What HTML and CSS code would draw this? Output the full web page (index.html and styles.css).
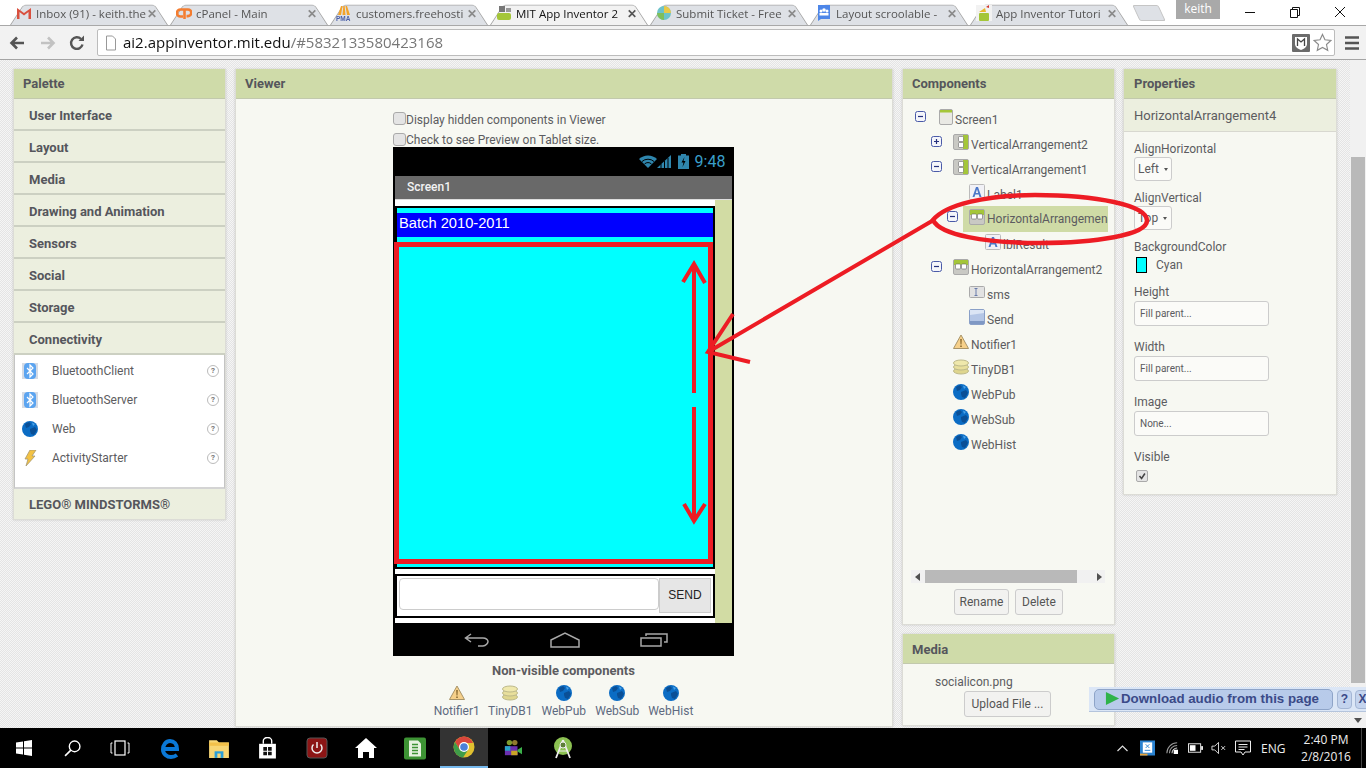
FILE: index.html
```html
<!DOCTYPE html>
<html lang="en">
<head>
<meta charset="utf-8">
<title>MIT App Inventor 2</title>
<link rel="stylesheet" href="styles.css">
</head>
<body>
<svg class="defs" width="0" height="0">
  <symbol id="globe" viewBox="0 0 16 16"><circle cx="8" cy="8" r="8" fill="#0b6cc4"/><path d="M3 3l4-2 2 2-2 3-3 1zM8 8l5-2 2 3-3 5-3-1-1-3z" fill="#0a4f96"/><path d="M10 1.500l3 1.500-2 2z" fill="#4aa3e8"/></symbol>
  <symbol id="warn" viewBox="0 0 16 16"><path d="M8 1L15.500 14.500H.5z" fill="#f6d08a" stroke="#a89468"/><path d="M7.200 5h1.600l-.3 5.500h-1zM7.200 11.500h1.600v1.600H7.200z" fill="#8a6a30"/></symbol>
  <symbol id="db" viewBox="0 0 16 16"><ellipse cx="8" cy="12" rx="7.500" ry="3" fill="#dfd68e" stroke="#bdb98a"/><ellipse cx="8" cy="8" rx="7.500" ry="3" fill="#e8df9c" stroke="#bdb98a"/><ellipse cx="8" cy="4" rx="7.500" ry="3" fill="#efe8ac" stroke="#bdb98a"/></symbol>
  <symbol id="harr" viewBox="0 0 16 16"><rect x=".5" y=".5" width="15" height="15" rx="1.500" fill="#c9c9c4" stroke="#aaa"/><rect x="1" y="1" width="14" height="5" fill="#a4c639"/><rect x="2.500" y="5" width="5" height="5" rx="1" fill="#fff" stroke="#666" stroke-width=".6"/><rect x="8.500" y="5" width="5" height="5" rx="1" fill="#fff" stroke="#666" stroke-width=".6"/></symbol>
  <symbol id="varr" viewBox="0 0 16 16"><rect x=".5" y=".5" width="15" height="15" rx="1.500" fill="#c9c9c4" stroke="#aaa"/><rect x="10" y="1" width="5" height="14" fill="#a4c639"/><rect x="5.500" y="2.500" width="5" height="5" rx="1" fill="#fff" stroke="#666" stroke-width=".6"/><rect x="5.500" y="8.500" width="5" height="5" rx="1" fill="#fff" stroke="#666" stroke-width=".6"/></symbol>
  <symbol id="label" viewBox="0 0 16 16"><rect x=".5" y=".5" width="15" height="15" rx="1" fill="#f1f1f6" stroke="#bbb"/><path d="M3.500 13L7 3h2l3.500 10h-2l-.8-2.500H6.300L5.500 13zM6.800 9h2.400L8 5.200z" fill="#4c78c8"/></symbol>
  <symbol id="textbox" viewBox="0 0 16 12"><rect x=".5" y=".5" width="15" height="11" rx="1" fill="#e2e2e2" stroke="#aaa"/><path d="M5.500 2.500h3M7 2.500v7M5.500 9.500h3" stroke="#6a7cab" fill="none"/></symbol>
  <symbol id="button" viewBox="0 0 16 16"><rect x=".5" y=".5" width="15" height="15" rx="1.500" fill="#b4c6e6" stroke="#8aa0c8"/><path d="M1 1h14v3L1 6z" fill="#dbe5f5"/><rect x="1" y="12" width="14" height="3" fill="#7f98c4"/></symbol>
  <symbol id="screen" viewBox="0 0 16 16"><rect x="1.500" y=".5" width="13" height="15" rx="1.500" fill="#e9e9e4" stroke="#aaa"/><rect x="2" y="1" width="12" height="2.500" fill="#a4c639"/></symbol>
  <symbol id="bt" viewBox="0 0 16 16"><rect width="16" height="16" fill="#d5dbe5"/><rect x="2" width="12" height="16" rx="4" fill="#5ba4f0"/><path d="M5 5l6 6-3 3V2l3 3-6 6" stroke="#fff" stroke-width="1.200" fill="none"/></symbol>
  <symbol id="bolt" viewBox="0 0 16 16"><path d="M8 0h6l-4 6h3L4 16l2-7H3z" fill="#f3c243" stroke="#a59873" stroke-width=".8"/></symbol>
  <symbol id="minus" viewBox="0 0 11 11"><rect x=".5" y=".5" width="10" height="10" rx="2" fill="#f4f5fa" stroke="#4a5aa8"/><path d="M3 5.500h5" stroke="#25307c" stroke-width="1.200"/></symbol>
  <symbol id="plus" viewBox="0 0 11 11"><rect x=".5" y=".5" width="10" height="10" rx="2" fill="#f4f5fa" stroke="#4a5aa8"/><path d="M3 5.500h5M5.500 3v5" stroke="#25307c" stroke-width="1.200"/></symbol>
</svg>

<header class="chrome">
  <div class="tabstrip">
    <div class="tab"><svg class="fav" viewBox="0 0 16 16"><path d="M1 14V3l7 5 7-5v11h-2.500V7L8 10.500 3.500 7v7z" fill="#d9503f"/></svg><span class="tab-text">Inbox (91) - keith.the</span><span class="tab-x">✕</span></div>
    <div class="tab"><svg class="fav" viewBox="0 0 16 16"><path d="M7.500 4.500H4.500a3.500 3.500 0 0 0 0 7H7M8.500 14V4.500h3.500a3.300 3.300 0 0 1 0 6.600H10.500" fill="none" stroke="#f47d30" stroke-width="2.600"/></svg><span class="tab-text">cPanel - Main</span><span class="tab-x">✕</span></div>
    <div class="tab"><svg class="fav" viewBox="0 0 16 16"><path d="M2 10L5 1h1.500L5 10zM6.500 10L7.300 1h1.400l.8 9zM11 10L9.500 1H11l3 9z" fill="#f3a32a"/><text class="fav-pma" x="0" y="16">PMA</text></svg><span class="tab-text">customers.freehosti</span><span class="tab-x">✕</span></div>
    <div class="tab tab-active"><svg class="fav" viewBox="0 0 16 16"><rect x="1" y="8" width="14" height="7" rx="2" fill="#a4c639"/><rect x="3" y="1" width="6" height="6" fill="#777"/><rect x="10" y="3" width="5" height="4" fill="#999"/></svg><span class="tab-text">MIT App Inventor 2</span><span class="tab-x">✕</span></div>
    <div class="tab"><svg class="fav" viewBox="0 0 16 16"><circle cx="8" cy="8" r="7" fill="#6ec3c9"/><path d="M8 1a7 7 0 0 1 7 7H8z" fill="#e9c947"/><path d="M1 8a7 7 0 0 0 7 7V8z" fill="#7fbf5a"/></svg><span class="tab-text">Submit Ticket - Free</span><span class="tab-x">✕</span></div>
    <div class="tab"><svg class="fav" viewBox="0 0 16 16"><path d="M2 0h12v14H5l-3 2z" fill="#4d86e8"/><circle cx="5" cy="6" r="1.500" fill="#fff"/><circle cx="11" cy="6" r="1.500" fill="#fff"/><circle cx="8" cy="5" r="1.800" fill="#fff"/><rect x="3.500" y="8" width="9" height="2.500" fill="#fff"/></svg><span class="tab-text">Layout scroolable -</span><span class="tab-x">✕</span></div>
    <div class="tab"><svg class="fav" viewBox="0 0 16 16"><rect width="16" height="16" fill="#f2f2f2"/><rect x="3" y="8" width="10" height="8" rx="1" fill="#a4c639"/><path d="M3 7l6-4 1 4z" fill="#e8b92e"/><path d="M10 2l3-2v3z" fill="#d2382f"/></svg><span class="tab-text">App Inventor Tutori</span><span class="tab-x">✕</span></div>
    <div class="newtab"></div>
    <div class="tab-spacer"></div>
    <div class="user-badge">keith</div>
    <div class="win-controls">
      <svg class="win-icon" viewBox="0 0 12 12"><path d="M1 6.500h10" stroke="#111"/></svg>
      <svg class="win-icon" viewBox="0 0 12 12"><path d="M1.500 3.500h7v8h-7zM3.500 3.500v-2h7v8h-2" stroke="#111" fill="none"/></svg>
      <svg class="win-icon" viewBox="0 0 12 12"><path d="M1 1l10 10M11 1L1 11" stroke="#111"/></svg>
    </div>
  </div>
  <div class="toolbar">
    <svg class="nav-icon nav-back" viewBox="0 0 16 16"><path d="M15 8H3M8 2.500L2.500 8 8 13.500" stroke="#555" stroke-width="2.600" fill="none"/></svg>
    <svg class="nav-icon nav-fwd" viewBox="0 0 16 16"><path d="M1 8h12M8 2.500L13.500 8 8 13.500" stroke="#c2c2c2" stroke-width="2.600" fill="none"/></svg>
    <svg class="nav-icon nav-reload" viewBox="0 0 16 16"><path d="M13.500 9.500A5.800 5.800 0 1 1 12 4" stroke="#555" stroke-width="2.400" fill="none"/><path d="M9.500 6H15V.5z" fill="#555"/></svg>
    <div class="omnibox">
      <svg class="page-icon" viewBox="0 0 12 16"><path d="M1.500 1h6l3 3v11h-9z" fill="#fff" stroke="#999"/></svg>
      <span class="url"><b>ai2.appinventor.mit.edu</b>/#5832133580423168</span>
      <svg class="ext-icon" viewBox="0 0 18 18"><rect width="18" height="18" rx="1" fill="#6b6b6b"/><path d="M3 3h12v7c0 3-3 5-6 6-3-1-6-3-6-6z" fill="#fff"/><path d="M5.500 12V5l3.500 3 3.500-3v7" stroke="#444" stroke-width="1.300" fill="none"/></svg>
      <svg class="star-icon" viewBox="0 0 20 20"><path d="M10 1.500l2.600 5.700 6.200.7-4.600 4.200 1.300 6.100L10 15.200l-5.500 3 1.300-6.100L1.200 7.900l6.200-.7z" fill="#fff" stroke="#8a8a8a" stroke-width="1.200"/></svg>
    </div>
    <svg class="menu-icon" viewBox="0 0 14 14"><path d="M0 1.500h14M0 7h14M0 12.500h14" stroke="#555" stroke-width="2.600"/></svg>
  </div>
</header>

<div class="page">
  <main class="workspace">
    <section class="panel palette">
      <h2 class="panel-head">Palette</h2>
      <div class="drawer">User Interface</div>
      <div class="drawer">Layout</div>
      <div class="drawer">Media</div>
      <div class="drawer">Drawing and Animation</div>
      <div class="drawer">Sensors</div>
      <div class="drawer">Social</div>
      <div class="drawer">Storage</div>
      <div class="drawer">Connectivity</div>
      <ul class="palette-list">
        <li class="palette-item"><svg class="ic16"><use href="#bt"/></svg><span class="palette-name">BluetoothClient</span><span class="help">?</span></li>
        <li class="palette-item"><svg class="ic16"><use href="#bt"/></svg><span class="palette-name">BluetoothServer</span><span class="help">?</span></li>
        <li class="palette-item"><svg class="ic16"><use href="#globe"/></svg><span class="palette-name">Web</span><span class="help">?</span></li>
        <li class="palette-item"><svg class="ic16"><use href="#bolt"/></svg><span class="palette-name">ActivityStarter</span><span class="help">?</span></li>
      </ul>
      <div class="drawer drawer-last">LEGO® MINDSTORMS®</div>
    </section>

    <section class="panel viewer">
      <h2 class="panel-head">Viewer</h2>
      <div class="viewer-body">
        <label class="check-row"><span class="fake-check"></span>Display hidden components in Viewer</label>
        <label class="check-row check-row-2"><span class="fake-check"></span>Check to see Preview on Tablet size.</label>
        <div class="phone">
          <div class="status-bar">
            <svg class="st-wifi" viewBox="0 0 18 13"><path d="M0 4a13 13 0 0 1 18 0L9 13z" fill="#2f86ad"/><path d="M3 6.500a9 9 0 0 1 12 0M5.500 9a5 5 0 0 1 7 0" stroke="#000" fill="none"/></svg>
            <svg class="st-signal" viewBox="0 0 14 13"><path d="M0 13L14 0v13z" fill="#2f86ad"/><path d="M4 13V9M7.500 13V6M11 13V3" stroke="#000"/></svg>
            <svg class="st-batt" viewBox="0 0 11 15"><path d="M3 0h5v1.500h3V15H0V1.500h3z" fill="#2f86ad"/><path d="M6.500 3L3.500 8.500h2L4.500 13l3-6h-2z" fill="#000"/></svg>
            <span class="st-time">9:48</span>
          </div>
          <div class="title-bar">Screen1</div>
          <div class="phone-body">
            <div class="form">
              <div class="vbox">
                <div class="blue-label">Batch 2010-2011</div>
                <div class="cyan-area"></div>
              </div>
              <div class="send-row">
                <div class="sms-input"></div>
                <div class="send-btn">SEND</div>
              </div>
            </div>
            <div class="form-side"></div>
          </div>
          <div class="nav-bar">
            <svg class="nb-back" viewBox="0 0 26 14"><path d="M7 1L1.500 5 7 9M2 5h17c3 0 5 2 5 3.500S22 13 19 13h-5" stroke="#a8a8a8" stroke-width="1.500" fill="none"/></svg>
            <svg class="nb-home" viewBox="0 0 30 16"><path d="M1 8L15 1l14 7v7H1z" stroke="#a8a8a8" stroke-width="1.500" fill="none"/></svg>
            <svg class="nb-recent" viewBox="0 0 28 14"><path d="M1 5h20v8H1zM6 3V1h21v8h-3" stroke="#a8a8a8" stroke-width="1.500" fill="none"/></svg>
          </div>
        </div>
        <div class="nonvisible-title">Non-visible components</div>
        <div class="nonvisible">
          <div class="nv-item"><svg class="ic16"><use href="#warn"/></svg><span>Notifier1</span></div>
          <div class="nv-item"><svg class="ic16"><use href="#db"/></svg><span>TinyDB1</span></div>
          <div class="nv-item"><svg class="ic16"><use href="#globe"/></svg><span>WebPub</span></div>
          <div class="nv-item"><svg class="ic16"><use href="#globe"/></svg><span>WebSub</span></div>
          <div class="nv-item"><svg class="ic16"><use href="#globe"/></svg><span>WebHist</span></div>
        </div>
      </div>
    </section>

    <div class="mid-col">
      <section class="panel components">
        <h2 class="panel-head">Components</h2>
        <div class="tree">
          <div class="row l1"><svg class="tog"><use href="#minus"/></svg><svg class="ic16"><use href="#screen"/></svg><span class="row-text">Screen1</span></div>
          <div class="row l2"><svg class="tog"><use href="#plus"/></svg><svg class="ic16"><use href="#varr"/></svg><span class="row-text">VerticalArrangement2</span></div>
          <div class="row l2"><svg class="tog"><use href="#minus"/></svg><svg class="ic16"><use href="#varr"/></svg><span class="row-text">VerticalArrangement1</span></div>
          <div class="row l3 no-tog"><svg class="ic16"><use href="#label"/></svg><span class="row-text">Label1</span></div>
          <div class="row l3 selected"><svg class="tog"><use href="#minus"/></svg><span class="sel-box"><svg class="ic16"><use href="#harr"/></svg><span class="row-text">HorizontalArrangemen</span></span></div>
          <div class="row l4 no-tog"><svg class="ic16"><use href="#label"/></svg><span class="row-text">lblResult</span></div>
          <div class="row l2"><svg class="tog"><use href="#minus"/></svg><svg class="ic16"><use href="#harr"/></svg><span class="row-text">HorizontalArrangement2</span></div>
          <div class="row l3 no-tog"><svg class="ic16"><use href="#textbox"/></svg><span class="row-text">sms</span></div>
          <div class="row l3 no-tog"><svg class="ic16"><use href="#button"/></svg><span class="row-text">Send</span></div>
          <div class="row l2 no-tog"><svg class="ic16"><use href="#warn"/></svg><span class="row-text">Notifier1</span></div>
          <div class="row l2 no-tog"><svg class="ic16"><use href="#db"/></svg><span class="row-text">TinyDB1</span></div>
          <div class="row l2 no-tog"><svg class="ic16"><use href="#globe"/></svg><span class="row-text">WebPub</span></div>
          <div class="row l2 no-tog"><svg class="ic16"><use href="#globe"/></svg><span class="row-text">WebSub</span></div>
          <div class="row l2 no-tog"><svg class="ic16"><use href="#globe"/></svg><span class="row-text">WebHist</span></div>
        </div>
        <div class="hscroll"><span class="arrow-l"></span><span class="hthumb"></span><span class="arrow-r"></span></div>
        <div class="btn-row"><button class="btn btn-rename">Rename</button><button class="btn btn-delete">Delete</button></div>
      </section>
      <section class="panel media">
        <h2 class="panel-head">Media</h2>
        <div class="media-file">socialicon.png</div>
        <button class="btn upload">Upload File ...</button>
      </section>
    </div>

    <section class="panel properties">
      <h2 class="panel-head">Properties</h2>
      <div class="prop-sub">HorizontalArrangement4</div>
      <div class="prop-list">
        <div class="prop-label">AlignHorizontal</div>
        <div class="select">Left<i class="caret"></i></div>
        <div class="prop-label">AlignVertical</div>
        <div class="select">Top<i class="caret"></i></div>
        <div class="prop-label">BackgroundColor</div>
        <div class="color-row"><span class="swatch"></span>Cyan</div>
        <div class="prop-label">Height</div>
        <div class="text-field">Fill parent...</div>
        <div class="prop-label">Width</div>
        <div class="text-field">Fill parent...</div>
        <div class="prop-label">Image</div>
        <div class="text-field">None...</div>
        <div class="prop-label">Visible</div>
        <div class="tick"><svg viewBox="0 0 12 12"><path d="M3 6l2.500 3L9.500 3" stroke="#444" stroke-width="1.800" fill="none"/></svg></div>
      </div>
    </section>
  </main>
  <aside class="vscroll"><span class="v-thumb"></span><span class="v-down"></span></aside>
</div>

<footer class="taskbar">
  <svg class="tb-icon tb-start" viewBox="0 0 16 16"><path d="M0 2.500l7-1v6H0zM8 1.300l8-1.300v7.500H8zM0 8.500h7v6l-7-1zM8 8.500h8V16l-8-1.300z" fill="#fff"/></svg>
  <svg class="tb-icon tb-search" viewBox="0 0 16 16"><circle cx="10" cy="6" r="5" stroke="#fff" fill="none" stroke-width="1.300"/><path d="M6.500 9.500L1 15" stroke="#fff" stroke-width="1.500"/></svg>
  <svg class="tb-icon tb-view" viewBox="0 0 20 16"><rect x="5" y="1" width="10" height="14" stroke="#fff" fill="none" stroke-width="1.200"/><path d="M2.500 3H1v10h1.500M17.500 3H19v10h-1.500" stroke="#fff" fill="none"/></svg>
  <svg class="tb-icon tb-edge" viewBox="0 0 20 20"><path d="M3.500 10.500h13.500c0-5-3-8-7-8s-7 4-7 8.500 4 7.500 8 7.500c2 0 4-.5 6-2" stroke="#0a78d7" stroke-width="4" fill="none"/></svg>
  <svg class="tb-icon tb-folder" viewBox="0 0 20 20"><path d="M1 3h7l2 2h9v14H1z" fill="#f8d775"/><rect x="1" y="5" width="18" height="3" fill="#f2c14a"/><rect x="6" y="13" width="8" height="6" fill="#2b9fd8"/><rect x="8.500" y="15" width="3" height="4" fill="#f8d775"/></svg>
  <svg class="tb-icon tb-store" viewBox="0 0 20 20"><path d="M2 6h16v14H2z" fill="#fff"/><path d="M6 6V3a4 3 0 0 1 8 0v3" stroke="#fff" fill="none" stroke-width="1.300"/><path d="M6 9h3.500v3.500H6zM10.500 9H14v3.500h-3.500zM6 13.500h3.500V17H6zM10.500 13.500H14V17h-3.500z" fill="#111"/></svg>
  <svg class="tb-icon tb-power" viewBox="0 0 22 22"><rect x="1" y="1" width="20" height="20" rx="3" fill="#8c1515" stroke="#555"/><path d="M7.500 7.500a5 5 0 1 0 7 0M11 5v6" stroke="#eee" stroke-width="1.500" fill="none"/></svg>
  <svg class="tb-icon tb-home" viewBox="0 0 22 20"><path d="M11 0L22 10h-3v10h-5v-6H8v6H3V10H0z" fill="#fff"/></svg>
  <svg class="tb-icon tb-green" viewBox="0 0 22 22"><rect width="22" height="22" rx="2" fill="#3d9334"/><path d="M5 3h9l3 3v13H5z" fill="#e7f2e0"/><path d="M8 7h6M8 10h6M8 13h6M8 16h6" stroke="#3d9334" stroke-width="1.500"/></svg>
  <div class="tb-active"><svg class="tb-chrome" viewBox="0 0 22 22"><circle cx="11" cy="11" r="10.500" fill="#e0c030"/><path d="M11 .5A10.500 10.500 0 0 0 2 6l5 8 4-7h9A10.500 10.500 0 0 0 11 .5z" fill="#d9463c"/><path d="M2 6a10.500 10.500 0 0 0 8 15.500L15 14H7z" fill="#3f9c49"/><circle cx="11" cy="11" r="5" fill="#fff"/><circle cx="11" cy="11" r="3.800" fill="#4a80d8"/></svg></div>
  <svg class="tb-icon tb-movie" viewBox="0 0 20 20"><circle cx="6" cy="4" r="3" fill="#7c9a2e"/><circle cx="12" cy="4" r="3" fill="#8f7a2e"/><rect x="1" y="8" width="14" height="10" fill="#6a2fb0"/><rect x="1" y="8" width="6" height="5" fill="#26a3c9"/><rect x="8" y="13" width="7" height="5" fill="#c9a326"/><path d="M15 12l5-3v8l-5-3z" fill="#3bb04a"/></svg>
  <svg class="tb-icon tb-studio" viewBox="0 0 22 22"><circle cx="11" cy="9" r="9" fill="#8cc152"/><path d="M11 3L4 21M11 3l7 18" stroke="#eee" stroke-width="1.800" fill="none"/><circle cx="11" cy="8" r="3" fill="#5d7f38" stroke="#eee"/><path d="M6 14h10" stroke="#eee"/></svg>
  <div class="tray">
    <svg class="tr tr-caret" viewBox="0 0 12 8"><path d="M1 7l5-5 5 5" stroke="#ddd" fill="none" stroke-width="1.200"/></svg>
    <svg class="tr tr-ie" viewBox="0 0 16 16"><rect width="16" height="16" fill="#2a82d0"/><rect x="3" y="2" width="10" height="11" fill="#fff"/><path d="M6 4l4 4M10 4L6 8M5 10.500h6" stroke="#2a82d0"/><rect y="14" width="8" height="2" fill="#e8a33a"/></svg>
    <svg class="tr tr-wifi" viewBox="0 0 14 14"><path d="M1 13A12 12 0 0 1 13 1M4 13a9 9 0 0 1 9-9" stroke="#999" fill="none" stroke-width="1.200"/><path d="M7 13a6 6 0 0 1 6-6" stroke="#ddd" fill="none" stroke-width="1.200"/><rect x="9" y="9" width="5" height="5" fill="#fff"/></svg>
    <svg class="tr tr-batt" viewBox="0 0 16 10"><rect x=".5" y=".5" width="13" height="9" stroke="#eee" fill="none"/><rect x="2" y="2" width="6" height="6" fill="#fff"/><rect x="14" y="3" width="2" height="4" fill="#eee"/></svg>
    <svg class="tr tr-sound" viewBox="0 0 16 14"><path d="M1 5h3l4-4v12L4 9H1z" stroke="#ddd" fill="none"/><path d="M11 5l4 4M15 5l-4 4" stroke="#ddd"/></svg>
    <svg class="tr tr-notif" viewBox="0 0 16 16"><path d="M.5 1h15v11H10l-2 3-2-3H.5z" stroke="#eee" fill="none"/><path d="M3.500 4.500h9M3.500 7h9M3.500 9.500h6" stroke="#eee"/></svg>
    <span class="tr-lang">ENG</span>
    <span class="tr-clock"><span>2:40 PM</span><span>2/8/2016</span></span>
    <span class="tr-end"></span>
  </div>
</footer>

<div class="dl-bar">
  <div class="dl-pill"><svg class="dl-play" viewBox="0 0 16 16"><path d="M1 1l14 7-14 7z" fill="#2fb34a"/></svg>Download audio from this page</div>
  <span class="dl-sq">?</span><span class="dl-sq">X</span>
</div>

<svg class="annot" viewBox="0 0 1366 768" width="1366" height="768">
  <g fill="none" stroke="#ed1c24">
    <rect x="396.500" y="244.500" width="314" height="317" stroke-width="5"/>
    <path d="M694 264V393M683 282L694 264 705 283M694 407V520M684 504L694 521 705 504" stroke-width="4"/>
    <path d="M932 221L708 352M733 314L708 352 750 362" stroke-width="4"/>
    <path d="M933 220C945 205 985 195 1035 195C1095 195 1148 205 1147 221C1146 235 1095 243 1040 243C985 243 940 235 933 220Z" stroke-width="4.500"/>
  </g>
</svg>
</body>
</html>
```
FILE: styles.css
```css
* { box-sizing: border-box; }
html, body { margin: 0; padding: 0; width: 1366px; height: 768px; overflow: hidden; }
body { position: relative; font-family: Roboto, "Liberation Sans", sans-serif; font-size: 12px; color: #5c5c60; display: flex; flex-direction: column; background: #fff; }
.defs { position: absolute; }
.ic16 { width: 16px; height: 16px; flex: none; }

.chrome { height: 60px; flex: none; display: flex; flex-direction: column; }
.tabstrip { height: 25px; flex: none; display: flex; padding-left: 8px; position: relative; background: #fff; }
.tab { width: 160px; height: 25px; flex: none; position: relative; display: flex; align-items: center; padding: 1px 9px 0 8px; font-family: "Open Sans", sans-serif; font-size: 11.500px; color: #555; }
.tab::before { content: ""; position: absolute; left: 2px; right: 0; top: 0; bottom: 0; background: #dee1e6; border: 1px solid #a6a6a6; border-bottom: 0; border-radius: 4px 4px 0 0; transform: perspective(30px) rotateX(14deg); transform-origin: bottom; }
.tab > * { position: relative; }
.tab-active { z-index: 2; color: #111; }
.tab-active::before { background: #f2f2f2; }
.fav { width: 16px; height: 16px; flex: none; margin-right: 4px; }
.fav-pma { font: 700 6.500px "Liberation Sans", sans-serif; fill: #4a5fa8; }
.tab-text { flex: 1; white-space: nowrap; overflow: hidden; min-width: 0; }
.tab-x { font-size: 12px; font-weight: 700; color: #8a8a8a; width: 12px; flex: none; }
.tab-active .tab-x { color: #555; }
.newtab { width: 26px; height: 16px; margin: 5px 0 0 8px; flex: none; background: #dee1e6; border: 1px solid #c5c5c5; border-radius: 2px; transform: skewX(25deg); }
.tab-spacer { flex: 1; }
.user-badge { width: 44px; height: 19px; flex: none; background: #a9a9a9; color: #fff; font-family: "Open Sans", sans-serif; font-size: 12px; text-align: center; line-height: 17px; }
.win-controls { width: 146px; flex: none; display: flex; justify-content: space-between; padding: 6px 20px 0 24px; align-items: flex-start; }
.win-icon { width: 12px; height: 12px; }

.toolbar { flex: 1; background: #f2f2f2; border-top: 1px solid #a8a8a8; border-bottom: 1px solid #a4a4a4; display: flex; align-items: center; position: relative; z-index: 3; }
.nav-icon { width: 16px; height: 16px; flex: none; }
.nav-back { margin-left: 9px; }
.nav-fwd { margin-left: 15px; }
.nav-reload { margin-left: 13px; }
.omnibox { margin-left: 12px; width: 1238px; height: 27px; background: #fff; border: 1px solid #bcbcbc; border-radius: 2px; display: flex; align-items: center; flex: none; padding-left: 7px; }
.page-icon { width: 12px; height: 16px; flex: none; }
.url { margin-left: 6px; font-family: "Open Sans", sans-serif; font-size: 15px; color: #777; flex: 1; white-space: nowrap; padding-bottom: 2px; }
.url b { font-weight: 400; color: #111; }
.ext-icon { width: 18px; height: 18px; flex: none; margin-right: 3px; }
.star-icon { width: 19px; height: 19px; flex: none; margin-right: 2px; }
.menu-icon { width: 14px; height: 14px; margin-left: 10px; flex: none; }

.page { flex: 1; min-height: 0; display: flex; background: repeating-conic-gradient(#e4e4e4 0 25%, #f5f5f5 0 50%) 0 0 / 2px 2px; }
.workspace { flex: 1; display: flex; align-items: flex-start; padding: 9px 0 0 13px; min-width: 0; }
.vscroll { width: 16px; flex: none; background: #f1f1f1; position: relative; padding: 97px 1px 0; display: flex; flex-direction: column; }
.v-thumb { height: 526px; background: #b9b9b9; flex: none; }
.v-down { margin: auto auto 5px; width: 0; height: 0; border: 4px solid transparent; border-top: 5px solid #505050; border-bottom: 0; }

.panel { background: #f7f8f2; box-shadow: 0 0 2px #c8c8c8; border: 1px solid #dcdcd6; border-width: 0 1px 1px; }
.panel-head { margin: 0; height: 30px; background: #cfdba9; border-bottom: 1px solid #c2c9ad; font-size: 13px; font-weight: 700; line-height: 30px; padding-left: 9px; color: #55565c; }

.palette { width: 213px; flex: none; background: #ecefdf; }
.drawer { height: 32px; background: #ecefdf; border-bottom: 2px solid #ccd0c2; font-size: 13px; font-weight: 700; line-height: 34px; padding-left: 15px; color: #55565c; }
.drawer-last { height: 30px; border-bottom: 0; line-height: 31px; }
.palette-list { list-style: none; margin: 0; padding: 1px 0 16px; height: 134px; background: #fff; border: 1px solid #c4c4c4; border-bottom: 2px solid #d4d4d4; border-top: 0; }
.palette-item { height: 29px; display: flex; align-items: center; padding-left: 7px; }
.palette-name { margin-left: 14px; flex: 1; }
.help { width: 12px; height: 12px; border: 1px solid #bbb; border-radius: 50%; font-size: 8px; font-weight: 700; text-align: center; line-height: 10px; color: #777; margin-right: 5px; }

.viewer { width: 658px; height: 658px; flex: none; margin-left: 9px; }
.viewer-body { padding: 13px 0 0 157px; display: flex; flex-direction: column; align-items: flex-start; }
.check-row { height: 15px; display: flex; align-items: center; }
.check-row-2 { margin-top: 6px; height: 14px; }
.fake-check { width: 13px; height: 13px; flex: none; border: 1px solid #aaa; border-radius: 3px; background: #e4e4e4; margin-bottom: 2px; }
.phone { width: 341px; height: 509px; background: #000; padding: 0 2px; flex: none; }
.status-bar { height: 29px; display: flex; align-items: center; justify-content: flex-end; padding: 0 6px 0 0; }
.st-wifi { width: 18px; height: 13px; }
.st-signal { width: 14px; height: 13px; }
.st-batt { width: 11px; height: 15px; margin: 0 5px 0 7px; }
.st-time { font-size: 16px; color: #3a9fca; width: 32px; text-align: center; }
.title-bar { height: 24px; background: #696969; color: #f2f2f2; font-size: 12px; font-weight: 500; line-height: 23px; padding-left: 12px; border-bottom: 1px solid #ddd; }
.phone-body { height: 423px; display: flex; background: #fff; }
.form { width: 320px; padding-top: 6px; display: flex; flex-direction: column; }
.vbox { height: 363px; border: 2px solid #000; background: #0ff; padding-top: 5px; }
.blue-label { height: 24px; background: #00f; color: #fff; font-family: "Liberation Sans", sans-serif; font-size: 14.700px; line-height: 21px; padding-left: 2px; }
.send-row { height: 44px; margin: 5px 0 0 0; border: 2px solid #000; display: flex; padding: 2px 2px 6px 2px; background: #fff; }
.sms-input { width: 260px; height: 32px; border: 1px solid #ccc; border-radius: 4px; background: #fff; }
.send-btn { width: 52px; height: 35px; background: #e6e6e6; border: 1px solid #ccc; color: #222; font-family: "Liberation Sans", sans-serif; font-size: 12px; text-align: center; line-height: 33px; }
.form-side { flex: 1; background: #d2dca4; }
.nav-bar { height: 33px; position: relative; display: flex; align-items: center; padding: 0 0 0 69px; }
.nb-back { width: 26px; height: 14px; flex: none; }
.nb-home { width: 30px; height: 16px; flex: none; margin-left: 60px; }
.nb-recent { width: 28px; height: 14px; flex: none; margin-left: 60px; }
.nonvisible-title { width: 341px; text-align: center; font-weight: 700; font-size: 13px; margin-top: 7px; height: 15px; }
.nonvisible { width: 341px; display: flex; padding-left: 37px; margin-top: 7px; }
.nv-item { display: flex; flex-direction: column; align-items: center; gap: 3px; width: 53.500px; flex: none; }
.nv-item span { color: #5e6a80; white-space: nowrap; }

.mid-col { width: 213px; margin-left: 9px; flex: none; display: flex; flex-direction: column; gap: 9px; }
.components { height: 556px; position: relative; display: flex; flex-direction: column; }
.tree { height: 471px; padding-top: 8px; flex: none; }
.row { height: 25px; display: flex; align-items: center; }
.row-text { margin-left: 2px; white-space: nowrap; }
.row .ic16, .row .tog { margin-bottom: 6px; }
.tog { width: 11px; height: 11px; flex: none; }
.l1 { padding-left: 12px; }
.l1 .tog { margin-right: 12px; }
.l1 .row-text { margin-left: 1px; }
.l2 { padding-left: 28px; }
.l2 .tog { margin-right: 11px; }
.l2.no-tog { padding-left: 50px; }
.l3 { padding-left: 44px; }
.l3.no-tog { padding-left: 66px; }
.l4.no-tog { padding-left: 82px; }
.selected .tog { margin-right: 5px; }
.sel-box { display: flex; align-items: center; width: 145px; height: 26px; background: #cfdba6; padding-left: 6px; flex: none; margin-bottom: 2px; }
.sel-box .ic16 { margin-bottom: 4px; }
.hscroll { height: 13px; margin: 0 8px; display: flex; align-items: center; flex: none; background: #f1f1f1; width: 194px; padding: 0 4px; }
.arrow-l { width: 0; height: 0; border: 4px solid transparent; border-right: 5px solid #505050; border-left: 0; flex: none; }
.hthumb { width: 152px; height: 13px; background: #b9b9b9; margin-left: 5px; flex: none; }
.arrow-r { width: 0; height: 0; border: 4px solid transparent; border-left: 5px solid #505050; border-right: 0; margin-left: 20px; flex: none; }
.btn-row { display: flex; gap: 6px; margin: 6px 0 0 51px; }
.btn { height: 26px; padding: 0; background: #f2f2f0; border: 1px solid #ccc; border-radius: 3px; color: #555; font-family: Roboto, sans-serif; font-size: 12px; }
.btn-rename { width: 55px; }
.btn-delete { width: 48px; }
.media { height: 92px; }
.media .panel-head { line-height: 31px; }
.media-file { margin: 11px 0 0 32px; line-height: 14px; }
.upload { display: block; margin: 2px 0 0 61px; width: 87px; }

.properties { width: 214px; margin-left: 8px; height: 426px; flex: none; }
.properties .panel-head { padding-left: 10px; }
.prop-sub { height: 33px; background: #ecefdf; border-bottom: 1px solid #d8d8d0; padding-left: 10px; line-height: 33px; font-size: 13px; }
.prop-list { padding: 10px 0 0 10px; display: flex; flex-direction: column; align-items: flex-start; }
.prop-label { height: 15px; line-height: 15px; margin-top: 10px; }
.prop-label:first-child { margin-top: 0; }
.color-row + .prop-label { margin-top: 11px; }
.text-field + .prop-label { margin-top: 14px; }
.select { width: 38px; height: 24px; border: 1px solid #ccc; border-radius: 3px; padding-left: 3px; display: flex; align-items: center; background: #fbfbf8; }
.caret { width: 0; height: 0; border: 2px solid transparent; border-top: 3px solid #555; border-bottom: 0; margin-left: 5px; }
.color-row { display: flex; align-items: center; height: 18px; margin-top: 1px; padding-left: 2px; }
.swatch { width: 11px; height: 16px; background: #0ff; border: 1px solid #000; margin-right: 9px; }
.text-field { width: 135px; height: 25px; margin-top: 1px; border: 1px solid #ccc; border-radius: 3px; background: #fbfbf8; padding-left: 5px; font-size: 10px; line-height: 23px; }
.tick { width: 12px; height: 12px; margin: 5px 0 0 2px; background: #e4e4e4; border: 1px solid #aaa; border-radius: 2px; }
.tick svg { display: block; width: 10px; height: 10px; }

.taskbar { height: 40px; flex: none; background: #000; display: flex; align-items: center; position: relative; }
.tb-icon { flex: none; }
.tb-start { width: 16px; height: 16px; margin-left: 16px; }
.tb-search { width: 17px; height: 17px; margin-left: 32px; }
.tb-view { width: 20px; height: 16px; margin-left: 29px; }
.tb-edge { width: 20px; height: 21px; margin-left: 30px; }
.tb-folder { width: 22px; height: 22px; margin-left: 28px; }
.tb-store { width: 21px; height: 22px; margin-left: 27px; }
.tb-power { width: 22px; height: 22px; margin-left: 28px; }
.tb-home { width: 22px; height: 20px; margin-left: 27px; }
.tb-green { width: 22px; height: 23px; margin-left: 27px; }
.tb-active { width: 48px; height: 40px; margin-left: 14px; background: #333; border-bottom: 2px solid #76b9ed; display: flex; align-items: center; justify-content: center; flex: none; }
.tb-chrome { width: 22px; height: 22px; }
.tb-movie { width: 18px; height: 20px; margin-left: 16px; }
.tb-studio { width: 22px; height: 22px; margin-left: 30px; }
.tray { position: absolute; right: 0; top: 0; height: 40px; display: flex; align-items: center; color: #eee; font-family: "Open Sans", sans-serif; font-size: 12px; }
.tr { flex: none; }
.tr-caret { width: 13px; height: 8px; }
.tr-ie { width: 15px; height: 16px; margin-left: 11px; }
.tr-wifi { width: 12px; height: 14px; margin-left: 11px; }
.tr-batt { width: 15px; height: 10px; margin-left: 10px; }
.tr-sound { width: 15px; height: 14px; margin-left: 8px; }
.tr-notif { width: 16px; height: 16px; margin-left: 9px; }
.tr-lang { margin-left: 10px; width: 24px; }
.tr-clock { display: flex; flex-direction: column; align-items: center; width: 54px; margin-left: 14px; line-height: 17px; }
.tr-end { width: 1px; height: 40px; background: #444; margin: 0 4px 0 8px; }

.dl-bar { position: absolute; left: 1089px; top: 687px; width: 277px; height: 25px; background: #dbe6f6; display: flex; align-items: center; gap: 3px; padding-left: 5px; border-bottom: 1px solid #b4c4dc; overflow: hidden; }
.dl-pill { width: 239px; height: 21px; flex: none; border: 1px solid #8ea4c8; border-radius: 5px; background: #b8cbea; color: #3b4a88; font-family: "Liberation Sans", sans-serif; font-weight: 700; font-size: 13.300px; display: flex; align-items: center; padding: 0 0 1px 10px; margin-right: 1px; white-space: nowrap; }
.dl-play { width: 15px; height: 15px; margin-right: 1px; flex: none; }
.dl-sq { width: 15px; height: 19px; flex: none; background: #c4d4ee; border: 1px solid #a4b6d4; border-radius: 4px; color: #3b4a88; font: 700 12px "Liberation Sans", sans-serif; text-align: center; line-height: 17px; }

.annot { position: absolute; left: 0; top: 0; pointer-events: none; }
```
